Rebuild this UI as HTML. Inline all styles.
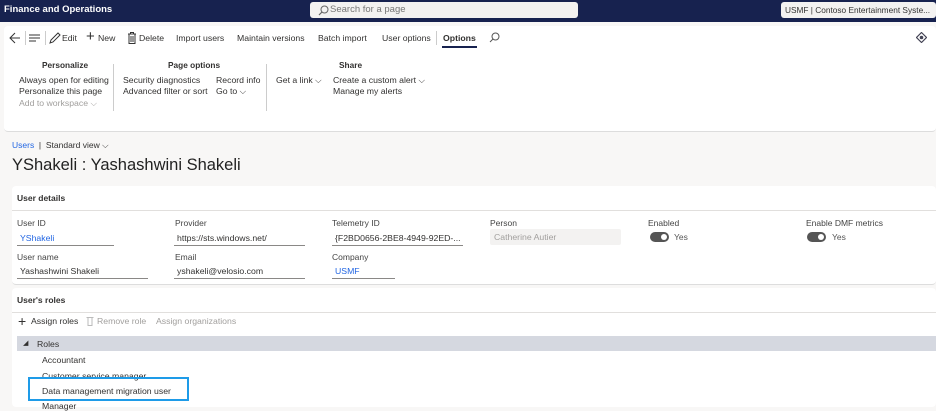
<!DOCTYPE html>
<html><head><style>
*{margin:0;padding:0;box-sizing:border-box}
body{width:936px;height:407px;overflow:hidden;background:#f8f7f6;font-family:"Liberation Sans",sans-serif;font-size:8.7px;color:#323130;position:relative}
.a{position:absolute;white-space:nowrap}
.nav{position:absolute;left:0;top:0;width:936px;height:22px;background:#17224f}
.lbl{color:#444;font-size:8.5px}
.fld{position:absolute;height:14px;border-bottom:1px solid #8a8886;padding-left:3px;line-height:12px;white-space:nowrap}
.blue{color:#2266e3}
.gray{color:#a19f9d}
.tg{position:absolute;width:19px;height:10px;border-radius:5px;background:#555}
.tg:after{content:"";position:absolute;right:2px;top:2px;width:6px;height:6px;border-radius:50%;background:#fff}
</style></head><body>
<div class="nav"></div>
<div class="a" style="left:4px;top:4px;color:#fff;font-weight:bold;font-size:9.5px">Finance and Operations</div>
<div class="a" style="left:310px;top:2px;width:268px;height:16px;background:#f3f2f1;border-radius:3px"></div>
<svg class="a" style="left:318px;top:5px" width="11" height="11" viewBox="0 0 11 11"><circle cx="6.5" cy="4.5" r="3.5" fill="none" stroke="#666" stroke-width="1"/><path d="M4 7 L1 10" stroke="#666" stroke-width="1.2"/></svg>
<div class="a" style="left:330px;top:4px;color:#777;font-size:9.5px">Search for a page</div>
<div class="a" style="left:781px;top:2px;width:155px;height:16px;background:#f3f2f1;border-radius:3px;padding:3px 0 0 4px;color:#333;font-size:8.3px;overflow:hidden">USMF | Contoso Entertainment Syste...</div>

<div class="a" style="left:4px;top:26px;width:932px;height:106px;background:#fff;border-radius:4px;border-bottom:1px solid #ddd"></div>
<svg class="a" style="left:9px;top:32px" width="12" height="12" viewBox="0 0 12 12"><path d="M11 6H1M6 1L1 6l5 5" fill="none" stroke="#333" stroke-width="1"/></svg>
<div class="a" style="left:25px;top:31px;width:1px;height:14px;background:#ccc"></div>
<svg class="a" style="left:29px;top:33px" width="12" height="10"><path d="M0 2h11M0 5h11M0 8h7" stroke="#333"/></svg>
<div class="a" style="left:45px;top:31px;width:1px;height:14px;background:#ccc"></div>
<svg class="a" style="left:49px;top:32px" width="12" height="12"><path d="M1 11l1-3 7-7 2 2-7 7z" fill="none" stroke="#333"/></svg>
<div class="a" style="left:62px;top:33px">Edit</div>
<div class="a" style="left:86px;top:28px;font-size:15px;font-weight:300">+</div>
<div class="a" style="left:98px;top:33px">New</div>
<svg class="a" style="left:127px;top:32px" width="10" height="12"><path d="M1 2h8M3.5 2V0.5h3V2M2 2v9.5h6V2M4 4v6M6 4v6" fill="none" stroke="#333"/></svg>
<div class="a" style="left:139px;top:33px">Delete</div>
<div class="a" style="left:176px;top:33px">Import users</div>
<div class="a" style="left:237px;top:33px">Maintain versions</div>
<div class="a" style="left:318px;top:33px">Batch import</div>
<div class="a" style="left:382px;top:33px">User options</div>
<div class="a" style="left:436px;top:31px;width:1px;height:14px;background:#ccc"></div>
<div class="a" style="left:443px;top:33px;font-weight:bold">Options</div>
<div class="a" style="left:442px;top:46px;width:35px;height:2px;background:#17224f"></div>
<svg class="a" style="left:489px;top:32px" width="11" height="11"><circle cx="6.5" cy="4.5" r="3.5" fill="none" stroke="#555"/><path d="M4 7L1 10" stroke="#555"/></svg>
<svg class="a" style="left:916px;top:32px" width="11" height="11" viewBox="0 0 11 11"><path d="M5.5 0.5L10.5 5.5 5.5 10.5 0.5 5.5z" fill="none" stroke="#445" stroke-width="1.2"/><circle cx="5.5" cy="5.5" r="1.8" fill="#445"/></svg>

<div class="a" style="left:42px;top:60px;font-weight:bold;font-size:8.3px">Personalize</div>
<div class="a" style="left:19px;top:75px">Always open for editing</div>
<div class="a" style="left:19px;top:86px">Personalize this page</div>
<div class="a gray" style="left:19px;top:98px">Add to workspace ⌵</div>
<div class="a" style="left:113px;top:64px;width:1px;height:47px;background:#ccc"></div>
<div class="a" style="left:168px;top:60px;font-weight:bold;font-size:8.3px">Page options</div>
<div class="a" style="left:123px;top:75px">Security diagnostics</div>
<div class="a" style="left:123px;top:86px">Advanced filter or sort</div>
<div class="a" style="left:216px;top:75px">Record info</div>
<div class="a" style="left:216px;top:86px">Go to ⌵</div>
<div class="a" style="left:266px;top:64px;width:1px;height:47px;background:#ccc"></div>
<div class="a" style="left:339px;top:60px;font-weight:bold;font-size:8.3px">Share</div>
<div class="a" style="left:276px;top:75px">Get a link ⌵</div>
<div class="a" style="left:333px;top:75px">Create a custom alert ⌵</div>
<div class="a" style="left:333px;top:86px">Manage my alerts</div>

<div class="a" style="left:12px;top:140px;font-size:8.5px"><span class="blue">Users</span> &nbsp;|&nbsp; Standard view ⌵</div>
<div class="a" style="left:12px;top:156px;font-size:16.5px;color:#222">YShakeli : Yashashwini Shakeli</div>

<div class="a" style="left:12px;top:186px;width:924px;height:99px;background:#fff;border-radius:4px;border-bottom:1px solid #ddd"></div>
<div class="a" style="left:17px;top:193px;font-weight:bold;font-size:8.5px">User details</div>
<div class="a" style="left:12px;top:210px;width:924px;height:1px;background:#e1dfdd"></div>
<div class="a lbl" style="left:17px;top:218px">User ID</div>
<div class="fld blue" style="left:17px;top:232px;width:97px">YShakeli</div>
<div class="a lbl" style="left:17px;top:252px">User name</div>
<div class="fld" style="left:17px;top:265px;width:131px">Yashashwini Shakeli</div>
<div class="a lbl" style="left:175px;top:218px">Provider</div>
<div class="fld" style="left:174px;top:232px;width:131px">https://sts.windows.net/</div>
<div class="a lbl" style="left:175px;top:252px">Email</div>
<div class="fld" style="left:174px;top:265px;width:131px">yshakeli@velosio.com</div>
<div class="a lbl" style="left:332px;top:218px">Telemetry ID</div>
<div class="fld" style="left:332px;top:232px;width:131px;overflow:hidden">{F2BD0656-2BE8-4949-92ED-...</div>
<div class="a lbl" style="left:332px;top:252px">Company</div>
<div class="fld blue" style="left:332px;top:265px;width:63px">USMF</div>
<div class="a lbl" style="left:490px;top:218px">Person</div>
<div class="a" style="left:490px;top:229px;width:131px;height:16px;background:#f3f2f1;border-radius:2px;color:#a19f9d;padding:3px 0 0 4px">Catherine Autier</div>
<div class="a lbl" style="left:648px;top:218px">Enabled</div>
<div class="tg" style="left:650px;top:232px"></div>
<div class="a" style="left:674px;top:232px;font-size:8.5px;color:#555">Yes</div>
<div class="a lbl" style="left:806px;top:218px">Enable DMF metrics</div>
<div class="tg" style="left:807px;top:232px"></div>
<div class="a" style="left:832px;top:232px;font-size:8.5px;color:#555">Yes</div>

<div class="a" style="left:12px;top:288px;width:924px;height:119px;background:#fff;border-radius:4px"></div>
<div class="a" style="left:17px;top:295px;font-weight:bold;font-size:8.5px">User's roles</div>
<div class="a" style="left:12px;top:312px;width:924px;height:1px;background:#e1dfdd"></div>
<div class="a" style="left:18px;top:313px;font-size:14px;font-weight:300">+</div>
<div class="a" style="left:31px;top:316px">Assign roles</div>
<svg class="a" style="left:86px;top:316px" width="8" height="10"><path d="M0.5 1.5h7M2 1.5v8h4v-8" fill="none" stroke="#bbb"/></svg>
<div class="a gray" style="left:97px;top:316px">Remove role</div>
<div class="a gray" style="left:156px;top:316px">Assign organizations</div>
<div class="a" style="left:17px;top:336px;width:919px;height:15px;background:#d5d8e0"></div>
<div class="a" style="left:23px;top:339px;font-size:7px">◢</div>
<div class="a" style="left:37px;top:339px">Roles</div>
<div class="a" style="left:42px;top:355px">Accountant</div>
<div class="a" style="left:42px;top:371px">Customer service manager</div>
<div class="a" style="left:42px;top:386px">Data management migration user</div>
<div class="a" style="left:42px;top:401px">Manager</div>
<div class="a" style="left:28px;top:377px;width:161px;height:24px;border:2.5px solid #1e9be8;background:transparent"></div>
</body></html>
